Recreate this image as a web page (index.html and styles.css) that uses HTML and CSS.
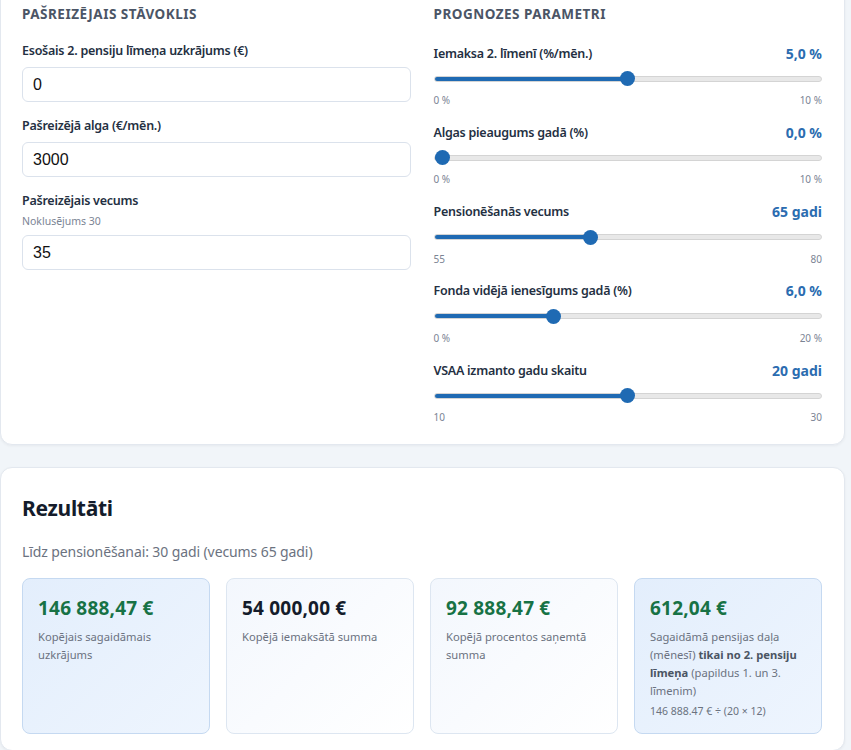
FILE: index.html
```html
<!DOCTYPE html>
<html lang="lv">
<head>
<meta charset="utf-8">
<link rel="stylesheet" href="styles.css">
</head>
<body>
<div class="page">
  <section class="card card-top">
    <div class="col">
      <h2 class="section-title">Pašreizējais stāvoklis</h2>
      <div class="field">
        <label class="field-label">Esošais 2. pensiju līmeņa uzkrājums (€)</label>
        <input class="text-input" type="text" value="0">
      </div>
      <div class="field">
        <label class="field-label">Pašreizējā alga (€/mēn.)</label>
        <input class="text-input" type="text" value="3000">
      </div>
      <div class="field">
        <label class="field-label">Pašreizējais vecums</label>
        <div class="hint">Noklusējums 30</div>
        <input class="text-input" type="text" value="35">
      </div>
    </div>
    <div class="col">
      <h2 class="section-title">Prognozes parametri</h2>
      <div class="slider-item">
        <div class="slider-head"><span class="slider-label">Iemaksa 2. līmenī (%/mēn.)</span><span class="slider-value">5,0 %</span></div>
        <input class="range" type="range" min="0" max="10" step="0.1" value="5" style="--p:0.5">
        <div class="range-ends"><span>0 %</span><span>10 %</span></div>
      </div>
      <div class="slider-item">
        <div class="slider-head"><span class="slider-label">Algas pieaugums gadā (%)</span><span class="slider-value">0,0 %</span></div>
        <input class="range" type="range" min="0" max="10" step="0.1" value="0" style="--p:0">
        <div class="range-ends"><span>0 %</span><span>10 %</span></div>
      </div>
      <div class="slider-item">
        <div class="slider-head"><span class="slider-label">Pensionēšanās vecums</span><span class="slider-value">65 gadi</span></div>
        <input class="range" type="range" min="55" max="80" step="1" value="65" style="--p:0.4">
        <div class="range-ends"><span>55</span><span>80</span></div>
      </div>
      <div class="slider-item">
        <div class="slider-head"><span class="slider-label">Fonda vidējā ienesīgums gadā (%)</span><span class="slider-value">6,0 %</span></div>
        <input class="range" type="range" min="0" max="20" step="0.1" value="6" style="--p:0.3">
        <div class="range-ends"><span>0 %</span><span>20 %</span></div>
      </div>
      <div class="slider-item">
        <div class="slider-head"><span class="slider-label">VSAA izmanto gadu skaitu</span><span class="slider-value">20 gadi</span></div>
        <input class="range" type="range" min="10" max="30" step="1" value="20" style="--p:0.5">
        <div class="range-ends"><span>10</span><span>30</span></div>
      </div>
    </div>
  </section>

  <section class="card card-results">
    <h1 class="results-title">Rezultāti</h1>
    <p class="results-sub">Līdz pensionēšanai: 30 gadi (vecums 65 gadi)</p>
    <div class="result-grid">
      <div class="result-box box-accent">
        <div class="result-value green">146 888,47 €</div>
        <div class="result-desc">Kopējais sagaidāmais uzkrājums</div>
      </div>
      <div class="result-box box-plain">
        <div class="result-value dark">54 000,00 €</div>
        <div class="result-desc">Kopējā iemaksātā summa</div>
      </div>
      <div class="result-box box-plain">
        <div class="result-value green">92 888,47 €</div>
        <div class="result-desc">Kopējā procentos saņemtā summa</div>
      </div>
      <div class="result-box box-accent">
        <div class="result-value green">612,04 €</div>
        <div class="result-desc">Sagaidāmā pensijas daļa (mēnesī) <strong>tikai no 2. pensiju līmeņa</strong> (papildus 1. un 3. līmenim)</div>
        <div class="result-formula">146 888.47 € ÷ (20 × 12)</div>
      </div>
    </div>
  </section>
</div>
</body>
</html>
```

FILE: styles.css
```css
* { box-sizing: border-box; }

html, body {
  margin: 0;
  padding: 0;
  background: #f1f5f9;
  font-family: "Noto Sans", "Open Sans", "DejaVu Sans", sans-serif;
  color: #1e293b;
}

.page {
  width: 845px;
  display: flex;
  flex-direction: column;
  gap: 22px;
  padding-bottom: 40px;
}

.card {
  background: #ffffff;
  border: 1px solid #e3e8ef;
  border-radius: 12px;
  box-shadow: 0 1px 3px rgba(15, 23, 42, 0.05);
}

.card-top {
  margin-top: -12px;
  padding: 15px 22px 20px 21px;
  display: grid;
  grid-template-columns: 1fr 1fr;
  column-gap: 23px;
}

.col { display: flex; flex-direction: column; }

.section-title {
  margin: 0 0 19px;
  font-size: 13.5px;
  line-height: 20px;
  font-weight: 700;
  letter-spacing: 0.5px;
  text-transform: uppercase;
  color: #4b5566;
}

.field { display: flex; flex-direction: column; margin-bottom: 16px; }

.field-label {
  font-size: 12.5px;
  line-height: 18px;
  font-weight: 600;
  letter-spacing: -0.25px;
  color: #243042;
  margin-top: -1px;
  margin-bottom: 7px;
}

.hint {
  font-size: 10.5px;
  line-height: 14px;
  color: #7b8494;
  margin-top: -3px;
  margin-bottom: 7px;
}

.text-input {
  height: 35px;
  width: 100%;
  padding: 0 10px;
  border: 1px solid #dbe2ec;
  border-radius: 6px;
  background: #fff;
  font-family: "Liberation Sans", Arial, sans-serif;
  font-size: 16px;
  color: #111;
  outline: none;
}

.slider-item { display: flex; flex-direction: column; margin-bottom: 15.3px; }
.slider-item:last-child { margin-bottom: 0; }

.slider-head {
  display: flex;
  justify-content: space-between;
  align-items: center;
  height: 20px;
}

.slider-label { font-size: 12.5px; font-weight: 600; letter-spacing: -0.25px; color: #243042; }
.slider-value { font-size: 14px; font-weight: 700; color: #2b6cb0; }

.range {
  -webkit-appearance: none;
  appearance: none;
  width: 100%;
  height: 15px;
  margin: 8px 0 0;
  background: transparent;
}

.range::-webkit-slider-runnable-track {
  height: 6px;
  border-radius: 3px;
  border: 1px solid #d4d4d4;
  background: linear-gradient(to right,
    #1f6ab3 0,
    #1f6ab3 calc(7px + var(--p) * (100% - 14px)),
    #e8e8e8 calc(7px + var(--p) * (100% - 14px)),
    #e8e8e8 100%);
}

.range::-webkit-slider-thumb {
  -webkit-appearance: none;
  appearance: none;
  width: 15px;
  height: 15px;
  border-radius: 50%;
  background: #1f6ab3;
  border: none;
  margin-top: -5.5px;
}

.range-ends {
  display: flex;
  justify-content: space-between;
  font-size: 10px;
  line-height: 14px;
  color: #7b8494;
  margin-top: 7px;
}

.card-results {
  padding: 26px 22px 16px 21px;
}

.results-title {
  margin: 0;
  font-size: 21px;
  line-height: 28px;
  font-weight: 700;
  letter-spacing: -0.3px;
  color: #141c2b;
}

.results-sub {
  margin: 20px 0 16px;
  font-size: 14px;
  line-height: 20px;
  letter-spacing: -0.1px;
  color: #6b7280;
}

.result-grid {
  display: grid;
  grid-template-columns: repeat(4, 1fr);
  gap: 16px;
}

.result-box {
  border-radius: 8px;
  padding: 17px 15px 15px;
  min-height: 156px;
}

.box-accent {
  background: linear-gradient(135deg, #e3eefc 0%, #eef5fe 100%);
  border: 1px solid #c5d9f1;
}

.box-plain {
  background: linear-gradient(135deg, #f3f7fd 0%, #ffffff 100%);
  border: 1px solid #dde6f1;
}

.result-value {
  font-size: 19px;
  line-height: 24px;
  font-weight: 700;
  letter-spacing: 0.2px;
}
.result-value.green { color: #177245; }
.result-value.dark { color: #141c2b; }

.result-desc {
  margin-top: 8px;
  font-size: 11.2px;
  line-height: 18px;
  color: #6b7280;
}
.result-desc strong { color: #4b5563; font-weight: 700; }

.result-formula {
  margin-top: 4px;
  font-size: 10.5px;
  line-height: 14px;
  color: #6b7280;
}
```
